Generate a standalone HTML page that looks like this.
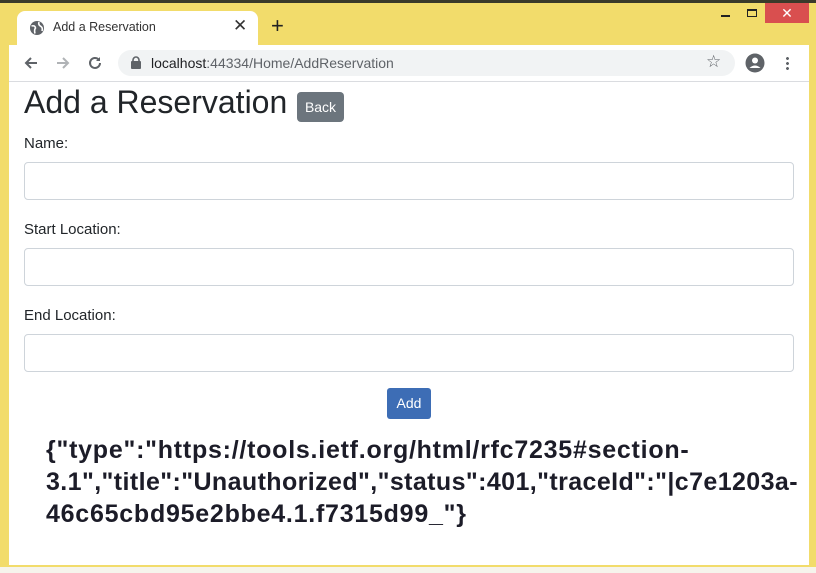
<!DOCTYPE html><html><head><style>
*{box-sizing:border-box;margin:0;padding:0}
body{width:816px;height:573px;background:#f2dc6b;font-family:"Liberation Sans",sans-serif;position:relative;overflow:hidden;color:#212529}
.abs{position:absolute}
.inp{position:absolute;left:24px;width:770px;height:38px;border:1px solid #ced4da;border-radius:4px;background:#fff}
.lbl{position:absolute;left:24px;font-size:15px}
.j{display:block}
</style></head><body>
<div class="abs" style="left:0;top:0;width:816px;height:3px;background:#3a3a2a"></div>
<div class="abs" style="left:0;top:567px;width:816px;height:6px;background:#f6f4ec"></div>
<!-- tab -->
<div class="abs" style="left:17px;top:11px;width:241px;height:35px;background:#fff;border-radius:8px 8px 0 0"></div>
<svg class="abs" style="left:29px;top:20px" width="16" height="16" viewBox="0 0 16 16"><circle cx="8" cy="8" r="7" fill="#5f6368"/><path d="M2.5 6 Q6 5 6.5 8 Q5 10 6 13.5 M10 2 Q9 5 12 6.5 Q14 8 13 11" stroke="#fff" stroke-width="1.6" fill="none"/></svg>
<div class="abs" style="left:53px;top:20px;font-size:12.5px;color:#333">Add a Reservation</div>
<div class="abs" style="left:233px;top:16px;font-size:17px;color:#333">✕</div>
<div class="abs" style="left:271px;top:13px;font-size:22px;color:#222">+</div>
<!-- window controls -->
<div class="abs" style="left:721px;top:15px;width:9px;height:2px;background:#222"></div>
<div class="abs" style="left:747px;top:9px;width:10px;height:8px;border:1.5px solid #222;border-top-width:2px"></div>
<div class="abs" style="left:765px;top:3px;width:44px;height:20px;background:#d94f4f;color:#fff;text-align:center;font-size:14px;line-height:20px">✕</div>
<!-- toolbar -->
<div class="abs" style="left:9px;top:45px;width:800px;height:520px;background:#fff;overflow:hidden">
<div class="abs" style="left:37px;top:389px;font-size:25px;font-weight:bold;line-height:32px;white-space:nowrap;color:#1c1c28">
<span class="j" style="letter-spacing:0.75px">{"type":"https://tools.ietf.org/html/rfc7235#section-</span>
<span class="j" style="letter-spacing:0.4px">3.1","title":"Unauthorized","status":401,"traceId":"|c7e1203a-</span>
<span class="j" style="letter-spacing:0.75px">46c65cbd95e2bbe4.1.f7315d99_"}</span>
</div>
</div>
<div class="abs" style="left:9px;top:81px;width:800px;height:1px;background:#dadce0"></div>
<div class="abs" style="left:118px;top:50px;width:617px;height:26px;background:#f1f3f4;border-radius:13px"></div>
<svg class="abs" style="left:22px;top:54px" width="18" height="18" viewBox="0 0 18 18"><path d="M15 9H4M9 4L4 9l5 5" stroke="#5f6368" stroke-width="2" fill="none"/></svg>
<svg class="abs" style="left:54px;top:54px" width="18" height="18" viewBox="0 0 18 18"><path d="M3 9h11M9 4l5 5-5 5" stroke="#b0b3b6" stroke-width="2" fill="none"/></svg>
<svg class="abs" style="left:86px;top:54px" width="18" height="18" viewBox="0 0 18 18"><path d="M14 9a5 5 0 1 1-1.5-3.6" stroke="#5f6368" stroke-width="2" fill="none"/><path d="M14 3v4h-4z" fill="#5f6368"/></svg>
<svg class="abs" style="left:130px;top:56px" width="12" height="13" viewBox="0 0 12 13"><rect x="1" y="5" width="10" height="8" rx="1" fill="#5f6368"/><path d="M3 6V4a3 3 0 0 1 6 0v2" stroke="#5f6368" stroke-width="1.6" fill="none"/></svg>
<div class="abs" style="left:151px;top:55px;font-size:14px;color:#202124">localhost<span style="color:#5f6368">:44334/Home/AddReservation</span></div>
<div class="abs" style="left:706px;top:52px;font-size:17px;color:#5f6368">☆</div>
<svg class="abs" style="left:745px;top:53px" width="20" height="20" viewBox="0 0 20 20"><circle cx="10" cy="10" r="9.5" fill="#5f6368"/><circle cx="10" cy="7.5" r="3" fill="#fff"/><path d="M4.5 15q5.5-5 11 0" fill="#fff"/></svg>
<div class="abs" style="left:786px;top:56px;width:3px;height:14px;background:radial-gradient(circle,#5f6368 1.3px,transparent 1.6px) 0 0/3px 5px"></div>
<!-- page -->
<div class="abs" style="left:24px;top:84px;font-size:32px;font-weight:500;color:#212529">Add a Reservation</div>
<div class="abs" style="left:297px;top:92px;width:47px;height:30px;background:#6c757d;border-radius:4px;color:#fff;font-size:14px;line-height:30px;text-align:center">Back</div>
<div class="lbl" style="top:135px">Name:</div>
<div class="inp" style="top:162px"></div>
<div class="lbl" style="top:221px">Start Location:</div>
<div class="inp" style="top:248px"></div>
<div class="lbl" style="top:307px">End Location:</div>
<div class="inp" style="top:334px"></div>
<div class="abs" style="left:387px;top:388px;width:44px;height:31px;background:#3d6db5;border-radius:3px;color:#fff;font-size:14px;line-height:31px;text-align:center">Add</div>
</body></html>
